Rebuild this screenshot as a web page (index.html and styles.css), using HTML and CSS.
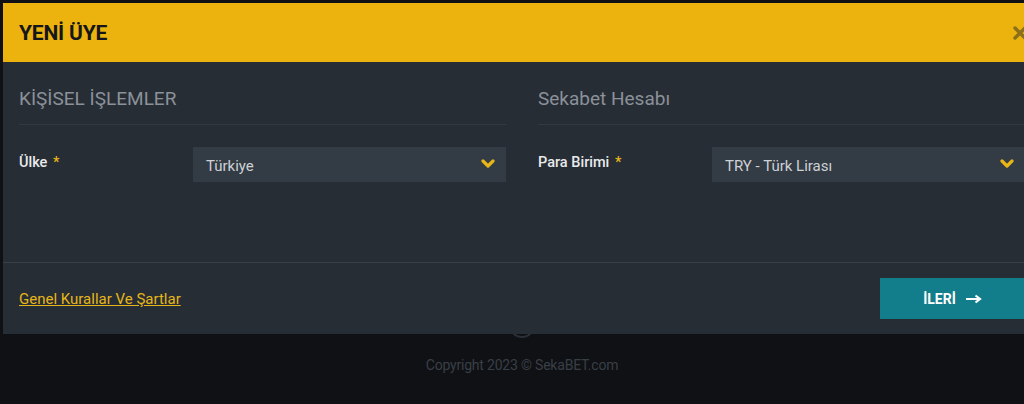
FILE: index.html
```html
<!DOCTYPE html>
<html lang="tr">
<head>
  <meta charset="UTF-8">
  <meta name="viewport" content="width=device-width, initial-scale=1.0">
  <title>Yeni Üye</title>
  <link rel="stylesheet" href="styles.css">
</head>
<body>

  <!-- Page footer behind the modal -->
  <div class="page">
    <div class="page-footer">
      <span class="to-top"></span>
      <p class="copyright">Copyright 2023 © SekaBET.com</p>
    </div>
  </div>

  <!-- Registration modal -->
  <div class="modal">
    <div class="modal-header">
      <h1>YENİ ÜYE</h1>
      <span class="close">
        <svg width="14" height="14" viewBox="0 0 14 14"><path d="M2 2 L12 12 M12 2 L2 12" stroke="#8c6f1a" stroke-width="3.4" stroke-linecap="round"/></svg>
      </span>
    </div>

    <div class="modal-body">
      <div class="col">
        <h2>KİŞİSEL İŞLEMLER</h2>
        <div class="field">
          <label>Ülke <span class="req">*</span></label>
          <div class="select">
            <span>Türkiye</span>
            <svg class="chev" width="14" height="10" viewBox="0 0 14 10"><path d="M2 2 L7 7 L12 2" fill="none" stroke="#e6b519" stroke-width="3.2" stroke-linecap="round" stroke-linejoin="round"/></svg>
          </div>
        </div>
      </div>
      <div class="col">
        <h2>Sekabet Hesabı</h2>
        <div class="field">
          <label>Para Birimi <span class="req">*</span></label>
          <div class="select">
            <span>TRY - Türk Lirası</span>
            <svg class="chev" width="14" height="10" viewBox="0 0 14 10"><path d="M2 2 L7 7 L12 2" fill="none" stroke="#e6b519" stroke-width="3.2" stroke-linecap="round" stroke-linejoin="round"/></svg>
          </div>
        </div>
      </div>
    </div>

    <div class="modal-footer">
      <a class="terms" href="#">Genel Kurallar Ve Şartlar</a>
      <button type="button" class="next">İLERİ
        <svg width="17" height="10" viewBox="0 0 17 10"><path d="M1 5 H14 M10.5 1.5 L15 5 L10.5 8.5" fill="none" stroke="#fff" stroke-width="2.2"/></svg>
      </button>
    </div>
  </div>

</body>
</html>
```

FILE: styles.css
```css
body {
  margin: 0;
  background-color: #0f1114;
  font-family: Roboto, 'Liberation Sans', sans-serif;
  overflow: hidden;
  height: 404px;
}

.page {
  height: 404px;
  display: flex;
  flex-direction: column;
  justify-content: flex-end;
}

.page-footer {
  display: flex;
  flex-direction: column;
  align-items: center;
  padding: 0 0 31px 20px;
}

.to-top {
  width: 22px;
  height: 22px;
  border: 2px solid #2b3038;
  border-radius: 50%;
  margin-bottom: 19px;
}

.copyright {
  margin: 0;
  color: #393f47;
  font-size: 14px;
  letter-spacing: -0.2px;
}

/* modal sits over the page */
.modal {
  position: absolute;
  top: 3px;
  left: 3px;
  width: 1038px;
  background-color: #272d35;
}

.modal-header {
  height: 59px;
  background-color: #ecb30f;
  display: flex;
  align-items: center;
  justify-content: space-between;
  padding: 0 16px;
}

.modal-header h1 {
  margin: 0;
  font-size: 21px;
  font-weight: 700;
  color: #15161a;
  letter-spacing: -0.2px;
}

.close {
  display: flex;
  margin-right: -2px;
}

.modal-body {
  display: grid;
  grid-template-columns: 1fr 1fr;
  column-gap: 32px;
  padding: 0 16px 80px;
}

.col h2 {
  margin: 0;
  padding: 24px 0 12px;
  border-bottom: 1px solid #323941;
  font-size: 19px;
  line-height: 26px;
  font-weight: 400;
  color: #8b9199;
}

.field {
  display: flex;
  align-items: center;
  margin-top: 22px;
}

.field label {
  width: 174px;
  flex-shrink: 0;
  color: #e9eaec;
  font-size: 14.5px;
  font-weight: 500;
  padding-bottom: 4px;
}

.req {
  color: #e6b519;
  margin-left: 2px;
}

.select {
  flex: 1;
  height: 35px;
  background-color: #333b44;
  display: flex;
  align-items: center;
  justify-content: space-between;
  padding: 0 11px 0 13px;
  color: #cdd1d6;
  font-size: 15px;
}

.select span {
  padding-top: 3px;
}

.chev {
  margin-top: -2px;
}

.modal-footer {
  border-top: 1px solid #38404a;
  height: 71px;
  display: flex;
  align-items: center;
  justify-content: space-between;
  padding: 0 16px;
}

.terms {
  color: #e6b519;
  font-size: 15px;
  text-decoration: underline;
}

.next {
  width: 145px;
  height: 41px;
  border: none;
  background-color: #127d8b;
  color: #fff;
  font-family: Roboto, 'Liberation Sans', sans-serif;
  font-size: 14px;
  font-weight: 700;
  display: flex;
  align-items: center;
  justify-content: center;
  gap: 9px;
  padding: 0 0 0 0;
  cursor: pointer;
}
```
